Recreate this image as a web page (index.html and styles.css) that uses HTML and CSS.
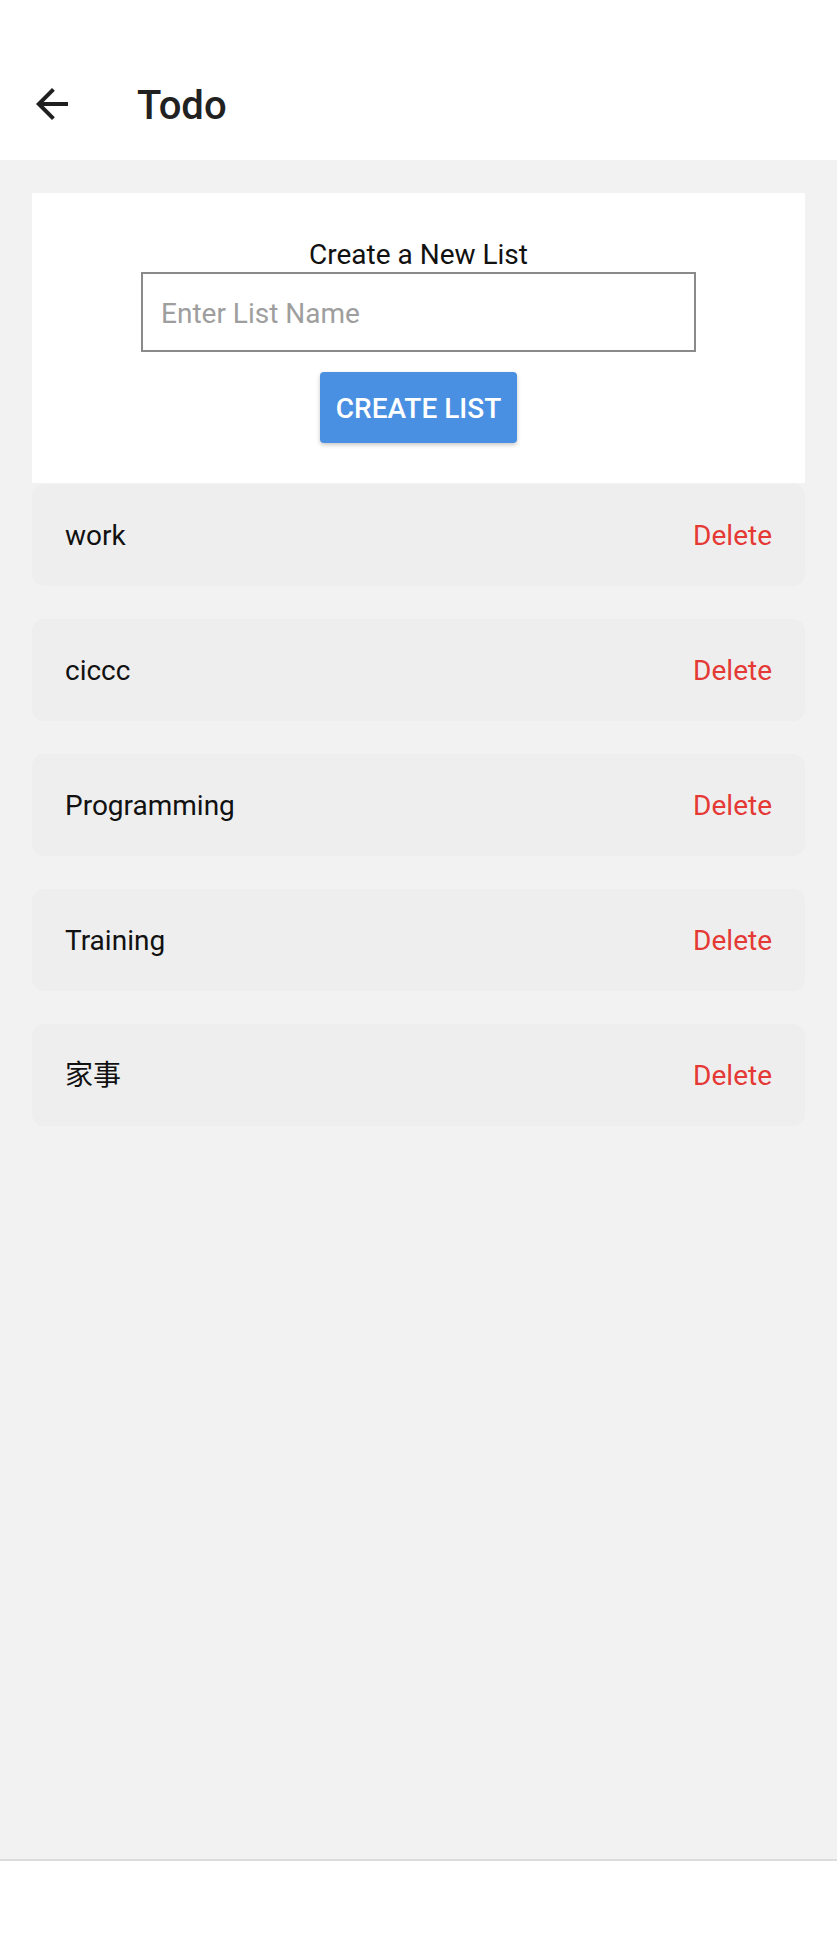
FILE: index.html
```html
<!DOCTYPE html>
<html lang="en">
<head>
<meta charset="utf-8">
<title>Todo</title>
<link rel="stylesheet" href="styles.css">
</head>
<body>
<div class="app">
  <header class="header">
    <div class="toolbar">
      <span class="back">
        <svg viewBox="0 0 24 24" width="48" height="48"><path d="M20 11H7.83l5.59-5.59L12 4l-8 8 8 8 1.41-1.41L7.83 13H20v-2z" fill="#1f1f1f"/></svg>
      </span>
      <h1 class="title">Todo</h1>
    </div>
  </header>
  <main class="main">
    <section class="card">
      <div class="card-title">Create a New List</div>
      <input class="name-input" type="text" placeholder="Enter List Name">
      <button class="create-btn">CREATE LIST</button>
    </section>
    <div class="lists">
      <div class="item"><span class="item-name">work</span><span class="delete">Delete</span></div>
      <div class="item"><span class="item-name">ciccc</span><span class="delete">Delete</span></div>
      <div class="item"><span class="item-name">Programming</span><span class="delete">Delete</span></div>
      <div class="item"><span class="item-name">Training</span><span class="delete">Delete</span></div>
      <div class="item"><span class="item-name">家事</span><span class="delete">Delete</span></div>
    </div>
  </main>
  <footer class="navbar"></footer>
</div>
</body>
</html>
```
FILE: styles.css
```css
* { box-sizing: border-box; }
html, body { margin: 0; padding: 0; }
body {
  font-family: Roboto, "Noto Sans CJK SC", "Noto Sans", sans-serif;
  background: #ffffff;
}
.app {
  display: flex;
  flex-direction: column;
  width: 837px;
  height: 1955px;
}
.header {
  background: #ffffff;
  padding-top: 48px;
  height: 160px;
  flex: none;
}
.toolbar {
  height: 112px;
  display: flex;
  align-items: center;
  padding-left: 28px;
}
.back {
  width: 48px;
  height: 48px;
  display: flex;
}
.title {
  margin: 4px 0 0 61px;
  font-size: 40px;
  font-weight: 500;
  color: #212121;
  line-height: 48px;
}
.main {
  flex: 1;
  background: #f2f2f2;
  padding: 33px 32px 0;
}
.card {
  background: #ffffff;
  padding: 45px 0 40px;
  display: flex;
  flex-direction: column;
  align-items: center;
}
.card-title {
  font-size: 28px;
  line-height: 33px;
  color: #111111;
}
.name-input {
  margin-top: 1px;
  width: 555px;
  height: 80px;
  border: 2px solid #8a8a8a;
  border-radius: 0;
  padding: 2px 18px 0;
  font-family: Roboto, sans-serif;
  font-size: 28px;
  color: #222;
  background: #fff;
  outline: none;
}
.name-input::placeholder { color: #9e9e9e; }
.create-btn {
  margin-top: 20px;
  height: 71px;
  padding: 2px 16px 0;
  border: none;
  border-radius: 4px;
  background: #4a90e2;
  color: #ffffff;
  font-family: Roboto, sans-serif;
  font-size: 28px;
  font-weight: 500;
  box-shadow: 0 2px 4px rgba(0,0,0,0.22);
}
.lists {
  margin-top: 1px;
  display: flex;
  flex-direction: column;
  gap: 33px;
}
.item {
  height: 102px;
  background: #eeeeee;
  border-radius: 12px;
  display: flex;
  align-items: center;
  justify-content: space-between;
  padding: 2px 33px 0;
  font-size: 28px;
  line-height: 34px;
}
.item-name { color: #111111; }
.delete { color: #e53935; }
.navbar {
  flex: none;
  height: 96px;
  background: #ffffff;
  border-top: 2px solid #dcdcdc;
}
```
